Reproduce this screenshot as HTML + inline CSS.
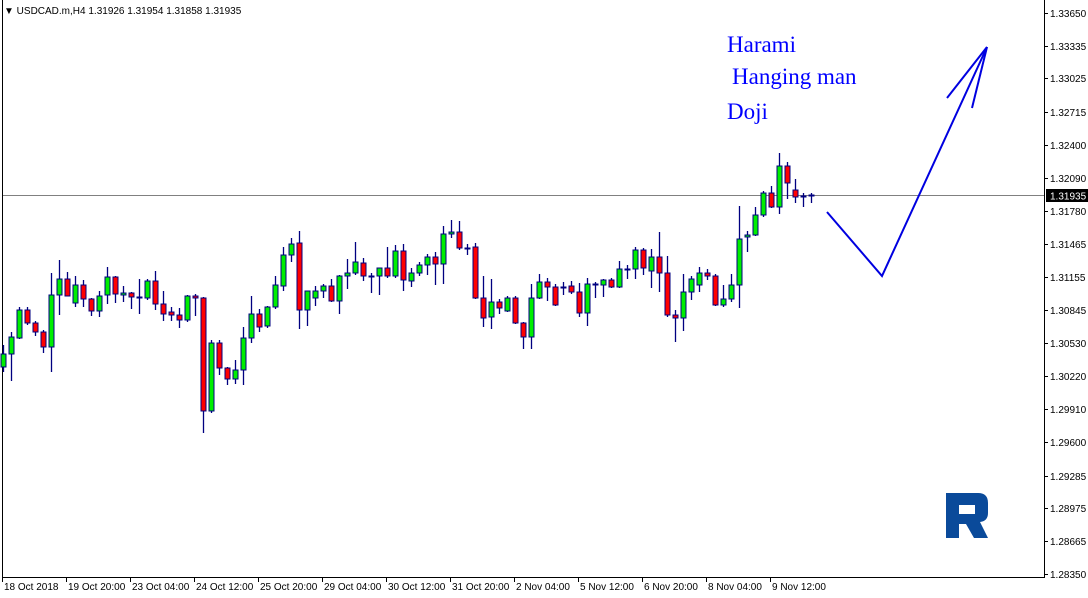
<!DOCTYPE html>
<html><head><meta charset="utf-8"><style>
body{margin:0;background:#fff;width:1088px;height:598px;overflow:hidden;font-family:"Liberation Sans",sans-serif;}
svg{position:absolute;left:0;top:0}
</style></head><body>
<svg id="s" width="1088" height="598" xmlns="http://www.w3.org/2000/svg">
<line x1="2.5" y1="0" x2="2.5" y2="578" stroke="#000"/>
<line x1="1044.5" y1="0" x2="1044.5" y2="578" stroke="#000"/>
<line x1="2" y1="577.5" x2="1045" y2="577.5" stroke="#000"/>
<line x1="3" y1="195.5" x2="1044" y2="195.5" stroke="#808080" stroke-width="1"/>
<g id="c"></g>
<g id="ax" font-size="10" fill="#000" font-family="Liberation Sans,sans-serif"></g>
<rect x="1046" y="189" width="42" height="13" fill="#000"/>
<text x="1050" y="199.5" font-size="10" fill="#fff">1.31935</text>
<text x="4" y="14" font-size="10" fill="#000">▼  USDCAD.m,H4  1.31926 1.31954 1.31858 1.31935</text>
<g fill="#0000ff" font-family="Liberation Serif,serif" font-size="23">
<text x="727" y="52">Harami</text>
<text x="732" y="84">Hanging man</text>
<text x="727" y="119">Doji</text>
</g>
<g stroke="#0000e0" stroke-width="2" fill="none">
<polyline points="827,212 882,276 987,47"/>
<line x1="987" y1="47" x2="947" y2="98"/>
<line x1="987" y1="47" x2="972" y2="108"/>
</g>
<path d="M946,493 H978 Q988,493 988,503 V513 Q988,521 980,522 L988,538 H974 L966,524 H959 V538 H946 Z M959,505 V514 H975 V505 Z" fill="#0a4a9a" fill-rule="evenodd"/>
</svg>
<script>
var d=[[354,367,345,372,1],[337,354,332,381,1],[310,338,307,339,1],[310,323,307,325,0],[323,332,321,336,0],[332,347,330,353,0],[295,347,273,372,1],[279,295,260,315,1],[279,296,272,296,0],[285,303,276,307,1],[285,299,280,307,0],[299,311,298,316,0],[296,311,291,317,1],[277,295,267,304,1],[277,294,276,303,0],[293,295,286,302,1],[293,297,292,309,0],[297,298,279,314,0],[281,298,279,300,1],[281,304,271,310,0],[304,314,291,321,0],[312,315,307,321,0],[315,320,308,328,0],[296,320,295,322,1],[296,298,294,316,0],[298,411,297,433,0],[343,411,340,413,1],[343,368,340,375,0],[368,379,367,385,0],[370,379,360,384,1],[338,370,327,385,1],[314,338,296,343,1],[314,327,309,332,0],[307,326,306,328,1],[285,307,276,309,1],[255,286,247,291,1],[244,255,238,262,1],[243,310,231,329,0],[291,310,291,326,1],[291,298,286,306,1],[286,291,284,298,1],[286,301,279,302,0],[276,301,275,314,1],[273,276,259,289,1],[262,273,242,275,1],[263,276,258,281,0],[276,276,273,293,1],[268,276,268,295,1],[268,276,247,278,0],[251,276,245,278,1],[251,280,244,291,0],[273,281,268,287,1],[265,273,262,276,1],[257,265,254,275,1],[257,264,252,285,0],[234,264,226,284,1],[232,234,220,238,1],[232,248,221,250,0],[248,248,244,255,0],[247,298,243,299,0],[298,318,276,327,0],[302,317,279,329,1],[302,308,299,314,0],[298,311,296,312,1],[298,323,296,324,0],[323,337,322,349,0],[298,337,284,349,1],[282,298,274,299,1],[282,287,278,301,0],[287,305,284,306,0],[287,287,282,295,1],[286,292,281,294,0],[292,313,283,317,0],[284,313,278,326,1],[284,284,282,298,1],[280,285,279,297,1],[280,287,278,288,0],[269,287,261,288,1],[269,269,265,279,1],[250,269,247,279,1],[250,268,248,275,0],[257,271,249,288,1],[257,273,232,292,0],[273,315,256,317,0],[315,318,310,342,0],[292,318,274,331,1],[279,292,276,300,1],[273,285,267,292,1],[273,276,269,280,0],[276,305,274,306,0],[299,305,285,307,1],[285,299,274,302,1],[239,285,206,308,1],[235,237,231,252,1],[215,235,207,236,1],[193,215,191,217,1],[193,207,186,208,0],[166,207,153,214,1],[166,183,162,199,0],[190,197,179,203,0],[196,197,193,207,0],[195,196,193,203,1]];
var h='';
d.forEach(function(c,i){var x=3.5+8*i;
h+='<line x1="'+x+'" y1="'+c[2]+'" x2="'+x+'" y2="'+c[3]+'" stroke="#000080" stroke-width="1.3"/>';
var ht=Math.max(c[1]-c[0],1);
h+='<rect x="'+(x-2.5)+'" y="'+c[0]+'" width="5" height="'+ht+'" fill="'+(c[4]?'#00ee00':'#ff0000')+'" stroke="#000080" stroke-width="1"/>';});
document.getElementById('c').innerHTML=h;
var p=[['1.33650',13],['1.33335',46],['1.33025',78],['1.32715',112],['1.32400',145],['1.32090',178],['1.31780',211],['1.31465',244],['1.31155',277],['1.30845',310],['1.30530',343],['1.30220',376],['1.29910',409],['1.29600',442],['1.29285',476],['1.28975',508],['1.28665',541],['1.28350',574]];
var a='';
p.forEach(function(q){a+='<line x1="1044" y1="'+q[1]+'.5" x2="1048" y2="'+q[1]+'.5" stroke="#000"/><text x="1050" y="'+(q[1]+4)+'">'+q[0]+'</text>';});
var t=[['18 Oct 2018',2],['19 Oct 20:00',66],['23 Oct 04:00',130],['24 Oct 12:00',194],['25 Oct 20:00',258],['29 Oct 04:00',322],['30 Oct 12:00',386],['31 Oct 20:00',450],['2 Nov 04:00',514],['5 Nov 12:00',578],['6 Nov 20:00',642],['8 Nov 04:00',706],['9 Nov 12:00',770]];
t.forEach(function(q){a+='<line x1="'+(q[1]+0.5)+'" y1="578" x2="'+(q[1]+0.5)+'" y2="582" stroke="#000"/><text x="'+(q[1]+2)+'" y="590">'+q[0]+'</text>';});
document.getElementById('ax').innerHTML=a;
</script>
</body></html>
